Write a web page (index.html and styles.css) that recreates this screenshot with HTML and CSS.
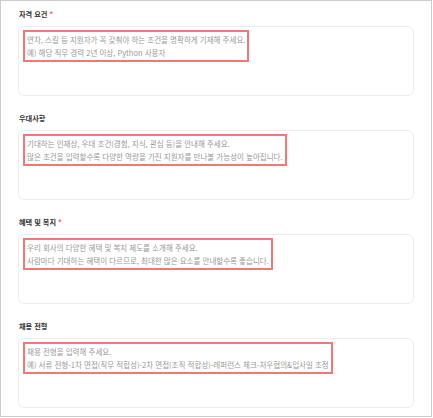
FILE: index.html
```html
<!DOCTYPE html>
<html lang="ko">
<head>
<meta charset="utf-8">
<link rel="stylesheet" href="styles.css">
</head>
<body>
<div class="frame">
  <section class="field">
    <div class="label">자격 요건 <span class="req">*</span></div>
    <div class="box">
      <div class="hint">연차, 스킬 등 지원자가 꼭 갖춰야 하는 조건을 명확하게 기재해 주세요.<br>예) 해당 직무 경력 2년 이상, Python 사용자</div>
    </div>
  </section>
  <section class="field">
    <div class="label">우대사항</div>
    <div class="box">
      <div class="hint">기대하는 인재상, 우대 조건(경험, 지식, 관심 등)을 안내해 주세요.<br>많은 조건을 입력할수록 다양한 역량을 가진 지원자를 만나볼 가능성이 높아집니다.</div>
    </div>
  </section>
  <section class="field">
    <div class="label">혜택 및 복지 <span class="req">*</span></div>
    <div class="box">
      <div class="hint">우리 회사의 다양한 혜택 및 복지 제도를 소개해 주세요.<br>사람마다 기대하는 혜택이 다르므로, 최대한 많은 요소를 안내할수록 좋습니다.</div>
    </div>
  </section>
  <section class="field">
    <div class="label">채용 전형</div>
    <div class="box">
      <div class="hint">채용 전형을 입력해 주세요.<br>예) 서류 전형-1차 면접(직무 적합성)-2차 면접(조직 적합성)-레퍼런스 체크-처우협의&amp;입사일 조정</div>
    </div>
  </section>
</div>
</body>
</html>
```
FILE: styles.css
```css
* { box-sizing: border-box; }
html, body { margin: 0; padding: 0; background: #fff; }
body {
  font-family: "Noto Sans CJK KR", "Noto Sans", sans-serif;
  width: 433px;
  height: 418px;
  overflow: hidden;
}
.frame {
  width: 432px;
  height: 417px;
  border: 1px solid #cdcdcd;
  padding: 8px 17px 0 17px;
  display: flex;
  flex-direction: column;
  gap: 17px;
}
.field {
  display: flex;
  flex-direction: column;
  gap: 7px;
}
.label {
  font-size: 7.2px;
  line-height: 10px;
  font-weight: 600;
  color: #333;
  padding-left: 1px;
}
.req { color: #f04a4a; }
.box {
  height: 70px;
  border: 1px solid #ededed;
  border-radius: 6px;
  padding: 3px 4px;
}
.hint {
  display: inline-block;
  border: 2px solid #f47676;
  padding: 1px 2px 1px 2px;
  font-size: 7.5px;
  line-height: 13px;
  color: #999;
  white-space: nowrap;
}
```
